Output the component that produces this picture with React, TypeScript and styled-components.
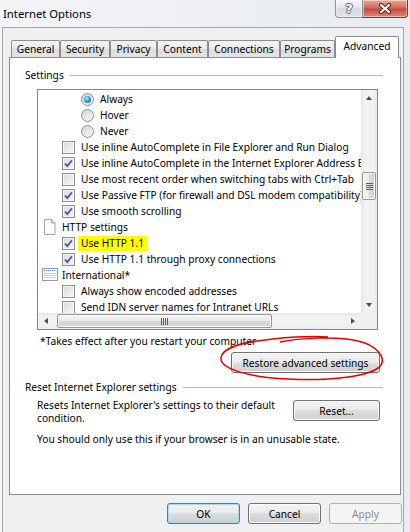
import styled, { createGlobalStyle } from "styled-components";

const GlobalStyle = createGlobalStyle`
  html, body {
    margin: 0;
    padding: 0;
  }
  body {
    font-family: "Noto Sans", "Open Sans", sans-serif;
    font-size: 10.2px;
    color: #000;
  }
`;

const Window = styled.div`
  width: 410px;
  height: 532px;
  overflow: hidden;
  display: flex;
  flex-direction: column;
  background: linear-gradient(90deg, #f3f5f8, #e8ebef);
`;

const TitleBar = styled.div`
  height: 27px;
  flex: none;
  display: flex;
  align-items: flex-start;
  padding: 0 2px 0 3px;
`;

const Title = styled.div`
  flex: 1;
  font-size: 11.3px;
  line-height: 14px;
  padding-top: 7px;
`;

const CaptionButton = styled.div<{ $close?: boolean }>`
  width: ${(p) => (p.$close ? 45 : 28)}px;
  height: 18px;
  box-sizing: border-box;
  display: flex;
  align-items: center;
  justify-content: center;
  border: 1px solid ${(p) => (p.$close ? "#7a3a32" : "#8f949c")};
  border-top: none;
  border-left: ${(p) => (p.$close ? "none" : undefined)};
  border-radius: ${(p) => (p.$close ? "0 0 4px 0" : "0 0 0 4px")};
  background: ${(p) =>
    p.$close
      ? "linear-gradient(#e9a89f, #d56a5d 45%, #c74a3b 55%, #d98a7f)"
      : "linear-gradient(#f4f5f7, #e3e6ea 50%, #d6dae0 50%, #dfe2e6)"};
  box-shadow: inset 0 0 0 1px rgba(255, 255, 255, 0.45);
  color: #fff;
  font-family: "DejaVu Sans", sans-serif;
  font-weight: bold;
  font-size: 13px;
  text-shadow: 1px 0 0 #5d646e, -1px 0 0 #5d646e, 0 1px 0 #5d646e, 0 -1px 0 #5d646e;
`;

const Client = styled.div`
  flex: 1;
  margin: 0 6px 0 2px;
  border: 1px solid #a8a8a8;
  border-bottom: none;
  background: #f0f0f0;
  display: flex;
  flex-direction: column;
  padding: 8px 1px 0 6px;
`;

const TabStrip = styled.div`
  display: flex;
  align-items: flex-end;
  height: 22px;
  padding-left: 2px;
  margin-bottom: -1px;
  position: relative;
  z-index: 1;
`;

const Tab = styled.div<{ $w: number; $active?: boolean }>`
  width: ${(p) => p.$w}px;
  height: ${(p) => (p.$active ? 22 : 17)}px;
  margin-bottom: ${(p) => (p.$active ? 0 : 1)}px;
  box-sizing: border-box;
  border: 1px solid #898c95;
  border-bottom: none;
  border-radius: 2px 2px 0 0;
  background: ${(p) => (p.$active ? "#fff" : "linear-gradient(#f3f3f3, #ebebeb 50%, #dddddd 50%, #e4e4e4)")};
  display: flex;
  justify-content: center;
  padding-top: ${(p) => (p.$active ? 2 : 1)}px;
  line-height: 14px;
`;

const Panel = styled.div`
  height: 438px;
  margin-right: 1px;
  box-sizing: border-box;
  background: #fff;
  border: 1px solid #898c95;
  padding: 10px 17px 0 15px;
  display: flex;
  flex-direction: column;
`;

const GroupHeader = styled.div<{ $gap?: number }>`
  display: flex;
  align-items: center;
  height: 14px;
  line-height: 14px;
  margin-top: ${(p) => p.$gap ?? 0}px;

  &::after {
    content: "";
    flex: 1;
    height: 1px;
    margin-left: 6px;
    background: #bdbdbd;
  }
`;

const ListBox = styled.div`
  margin: 7px 0 0 12px;
  width: 341px;
  height: 241px;
  box-sizing: border-box;
  border: 1px solid #828790;
  display: grid;
  grid-template-columns: 1fr 16px;
  grid-template-rows: 1fr 16px;
`;

const ListContent = styled.div`
  overflow: hidden;
  padding-top: 1px;
  white-space: nowrap;
`;

const Row = styled.div<{ $indent: number }>`
  display: flex;
  align-items: center;
  height: 16px;
  padding-left: ${(p) => p.$indent}px;
`;

const Check = styled.span`
  width: 13px;
  height: 13px;
  flex: none;
  margin-right: 6px;
  box-sizing: border-box;
  border: 1px solid #8e8f8f;
  background: linear-gradient(135deg, #d4d7db, #f8f8f8);
  box-shadow: inset 0 0 0 1px #f4f4f4;
  display: flex;
`;

const Radio = styled.span<{ $on?: boolean }>`
  width: 13px;
  height: 13px;
  flex: none;
  margin-right: 6px;
  box-sizing: border-box;
  border-radius: 50%;
  border: 1px solid #8e8f8f;
  background: linear-gradient(135deg, #d0d3d8, #fbfbfb);
  display: flex;
  align-items: center;
  justify-content: center;

  &::after {
    content: "";
    display: ${(p) => (p.$on ? "block" : "none")};
    width: 7px;
    height: 7px;
    border-radius: 50%;
    background: radial-gradient(circle at 40% 35%, #c9ecff 0, #3da3e6 40%, #0b4f93 100%);
  }
`;

const IconBox = styled.span`
  width: 16px;
  height: 16px;
  flex: none;
  margin-right: 4px;
  display: flex;
`;

const Marked = styled.span`
  background: #ffff00;
  line-height: 15px;
  padding: 0 4px 0 3px;
  margin-left: -3px;
`;

const VScroll = styled.div`
  display: flex;
  flex-direction: column;
  background: linear-gradient(90deg, #e6e6e6, #f2f2f2 25%, #f2f2f2 75%, #e9e9e9);
`;

const HScroll = styled.div`
  display: flex;
  align-items: stretch;
  background: linear-gradient(#e6e6e6, #f2f2f2 25%, #f2f2f2 75%, #e9e9e9);
`;

const Corner = styled.div`
  background: #f0f0f0;
`;

const ArrowButton = styled.div`
  width: 16px;
  height: 16px;
  flex: none;
  display: flex;
  align-items: center;
  justify-content: center;
`;

const Arrow = styled.span<{ $dir: "up" | "down" | "left" | "right" }>`
  width: 0;
  height: 0;
  border-style: solid;
  border-color: transparent;
  ${(p) =>
    p.$dir === "up"
      ? "border-width: 0 3.5px 4px 3.5px; border-bottom-color: #4d4d4d;"
      : p.$dir === "down"
      ? "border-width: 4px 3.5px 0 3.5px; border-top-color: #4d4d4d;"
      : p.$dir === "left"
      ? "border-width: 3.5px 4px 3.5px 0; border-right-color: #4d4d4d;"
      : "border-width: 3.5px 0 3.5px 4px; border-left-color: #4d4d4d;"}
`;

const Track = styled.div<{ $vertical?: boolean }>`
  flex: 1;
  display: flex;
  flex-direction: ${(p) => (p.$vertical ? "column" : "row")};
`;

const Thumb = styled.div<{ $vertical?: boolean; $offset: number; $size: number }>`
  box-sizing: border-box;
  ${(p) =>
    p.$vertical
      ? `margin: ${p.$offset}px 1px 0 1px; height: ${p.$size}px;
         background: linear-gradient(90deg, #f6f6f6, #e9e9e9 50%, #d9d9d9 50%, #d2d2d2);`
      : `margin: 1px 0 1px ${p.$offset}px; width: ${p.$size}px;
         background: linear-gradient(#f6f6f6, #e9e9e9 50%, #d9d9d9 50%, #d2d2d2);`}
  border: 1px solid #979797;
  border-radius: 2px;
  box-shadow: inset 0 0 0 1px #fbfbfb;
  display: flex;
  align-items: center;
  justify-content: center;
`;

const Grip = styled.span<{ $vertical?: boolean }>`
  width: 7px;
  height: 7px;
  background: ${(p) =>
    p.$vertical
      ? "repeating-linear-gradient(to bottom, #5c5c5c 0 1px, transparent 1px 2px)"
      : "repeating-linear-gradient(to right, #5c5c5c 0 1px, transparent 1px 2px)"};
`;

const Note = styled.div`
  margin: 4px 0 0 15px;
  line-height: 14px;
`;

const RestoreRow = styled.div`
  position: relative;
  display: flex;
  justify-content: flex-end;
  margin-top: 4px;
  padding-right: 3px;
`;

const Scribble = styled.svg`
  position: absolute;
  left: 193px;
  top: -19px;
  overflow: visible;
  pointer-events: none;
`;

const Button = styled.button<{ $w: number; $default?: boolean }>`
  width: ${(p) => p.$w}px;
  height: 21px;
  box-sizing: border-box;
  padding: 0;
  font: inherit;
  color: #000;
  border: 1px solid ${(p) => (p.$default ? "#3c7fb1" : "#707070")};
  border-radius: 3px;
  background: linear-gradient(#f2f2f2, #ebebeb 50%, #dddddd 50%, #cfcfcf);
  box-shadow: inset 0 0 0 1px ${(p) => (p.$default ? "#a6dbf7" : "#fbfbfb")};

  &:disabled {
    color: #8d8d8d;
    border-color: #adb2b5;
    background: #f4f4f4;
    box-shadow: none;
  }
`;

const ResetRow = styled.div`
  display: flex;
  justify-content: space-between;
  align-items: flex-start;
  margin-top: 5px;
  padding: 0 3px 0 12px;
`;

const ResetText = styled.div`
  line-height: 13px;
`;

const Hint = styled.div`
  margin-top: 7px;
  padding-left: 12px;
  line-height: 14px;
`;

const ButtonRow = styled.div`
  display: flex;
  justify-content: flex-end;
  gap: 8px;
  margin: 8px 0 0 0;
`;

type Item = {
  kind: "radio" | "check" | "page" | "intl";
  label: string;
  on?: boolean;
  mark?: boolean;
};

const items: Item[] = [
  { kind: "radio", label: "Always", on: true },
  { kind: "radio", label: "Hover" },
  { kind: "radio", label: "Never" },
  { kind: "check", label: "Use inline AutoComplete in File Explorer and Run Dialog" },
  { kind: "check", label: "Use inline AutoComplete in the Internet Explorer Address Bar and Open Dialog", on: true },
  { kind: "check", label: "Use most recent order when switching tabs with Ctrl+Tab" },
  { kind: "check", label: "Use Passive FTP (for firewall and DSL modem compatibility)", on: true },
  { kind: "check", label: "Use smooth scrolling", on: true },
  { kind: "page", label: "HTTP settings" },
  { kind: "check", label: "Use HTTP 1.1", on: true, mark: true },
  { kind: "check", label: "Use HTTP 1.1 through proxy connections", on: true },
  { kind: "intl", label: "International*" },
  { kind: "check", label: "Always show encoded addresses" },
  { kind: "check", label: "Send IDN server names for Intranet URLs" },
];

const tabs = [
  { name: "General", w: 49 },
  { name: "Security", w: 50 },
  { name: "Privacy", w: 47 },
  { name: "Content", w: 51 },
  { name: "Connections", w: 72 },
  { name: "Programs", w: 55 },
  { name: "Advanced", w: 64, active: true },
];

const indents = { radio: 43, check: 24, page: 4, intl: 4 };

function PageIcon() {
  return (
    <svg width="16" height="16" viewBox="0 0 16 16">
      <path d="M2.5 0.5h7l3.5 3.5v11.5h-10.5z" fill="#fff" stroke="#a3a3a3" />
      <path d="M9.5 0.5v3.5h3.5" fill="#f0f0f0" stroke="#a3a3a3" />
    </svg>
  );
}

function IntlIcon() {
  return (
    <svg width="16" height="16" viewBox="0 0 16 16">
      <rect x="0.5" y="1.5" width="15" height="12" fill="#fbfcfe" stroke="#8e9bb0" />
      <path d="M2 3.5h12" stroke="#4a86d6" strokeDasharray="1 1" />
      <path d="M2 6.5h12M2 8.5h12M2 10.5h12" stroke="#c2cde0" />
    </svg>
  );
}

function CheckMark() {
  return (
    <svg width="11" height="11" viewBox="0 0 11 11">
      <path d="M2 5.5l2.3 2.6L9 2.2" fill="none" stroke="#3d55a5" strokeWidth="1.7" />
    </svg>
  );
}

function ListRow({ item }: { item: Item }) {
  const label = item.mark ? <Marked>{item.label}</Marked> : <span>{item.label}</span>;
  return (
    <Row $indent={indents[item.kind]}>
      {item.kind === "radio" && <Radio $on={item.on} />}
      {item.kind === "check" && <Check>{item.on && <CheckMark />}</Check>}
      {item.kind === "page" && (
        <IconBox>
          <PageIcon />
        </IconBox>
      )}
      {item.kind === "intl" && (
        <IconBox>
          <IntlIcon />
        </IconBox>
      )}
      {label}
    </Row>
  );
}

export default function App() {
  return (
    <Window>
      <GlobalStyle />
      <TitleBar>
        <Title>Internet Options</Title>
        <CaptionButton>?</CaptionButton>
        <CaptionButton $close>
          <svg width="14" height="11" viewBox="0 0 14 11">
            <path d="M3 2l8 7M11 2l-8 7" stroke="#5a2019" strokeWidth="4.2" strokeLinecap="round" />
            <path d="M3 2l8 7M11 2l-8 7" stroke="#fff" strokeWidth="2.2" strokeLinecap="round" />
          </svg>
        </CaptionButton>
      </TitleBar>
      <Client>
        <TabStrip>
          {tabs.map((t) => (
            <Tab key={t.name} $w={t.w} $active={t.active}>
              {t.name}
            </Tab>
          ))}
        </TabStrip>
        <Panel>
          <GroupHeader>Settings</GroupHeader>
          <ListBox>
            <ListContent>
              {items.map((it) => (
                <ListRow key={it.label} item={it} />
              ))}
            </ListContent>
            <VScroll>
              <ArrowButton>
                <Arrow $dir="up" />
              </ArrowButton>
              <Track $vertical>
                <Thumb $vertical $offset={66} $size={28}>
                  <Grip $vertical />
                </Thumb>
              </Track>
              <ArrowButton>
                <Arrow $dir="down" />
              </ArrowButton>
            </VScroll>
            <HScroll>
              <ArrowButton>
                <Arrow $dir="left" />
              </ArrowButton>
              <Track>
                <Thumb $offset={3} $size={215}>
                  <Grip />
                </Thumb>
              </Track>
              <ArrowButton>
                <Arrow $dir="right" />
              </ArrowButton>
            </HScroll>
            <Corner />
          </ListBox>
          <Note>*Takes effect after you restart your computer</Note>
          <RestoreRow>
            <Button $w={149}>Restore advanced settings</Button>
            <Scribble width="170" height="50" viewBox="0 0 170 50">
              <path
                d="M62 9C80 5 120 3 140 8C158 12 168 24 163 32C155 44 110 48 70 46C30 44 2 36 3 25C4 14 25 9 55 6C75 4 95 3 110 4"
                fill="none"
                stroke="#e00000"
                strokeWidth="1.5"
              />
            </Scribble>
          </RestoreRow>
          <GroupHeader $gap={7}>Reset Internet Explorer settings</GroupHeader>
          <ResetRow>
            <ResetText>
              Resets Internet Explorer's settings to their default
              <br />
              condition.
            </ResetText>
            <Button $w={87} style={{ marginTop: 1 }}>
              Reset...
            </Button>
          </ResetRow>
          <Hint>You should only use this if your browser is in an unusable state.</Hint>
        </Panel>
        <ButtonRow>
          <Button $w={73} $default>
            OK
          </Button>
          <Button $w={73}>Cancel</Button>
          <Button $w={73} disabled>
            Apply
          </Button>
        </ButtonRow>
      </Client>
    </Window>
  );
}
